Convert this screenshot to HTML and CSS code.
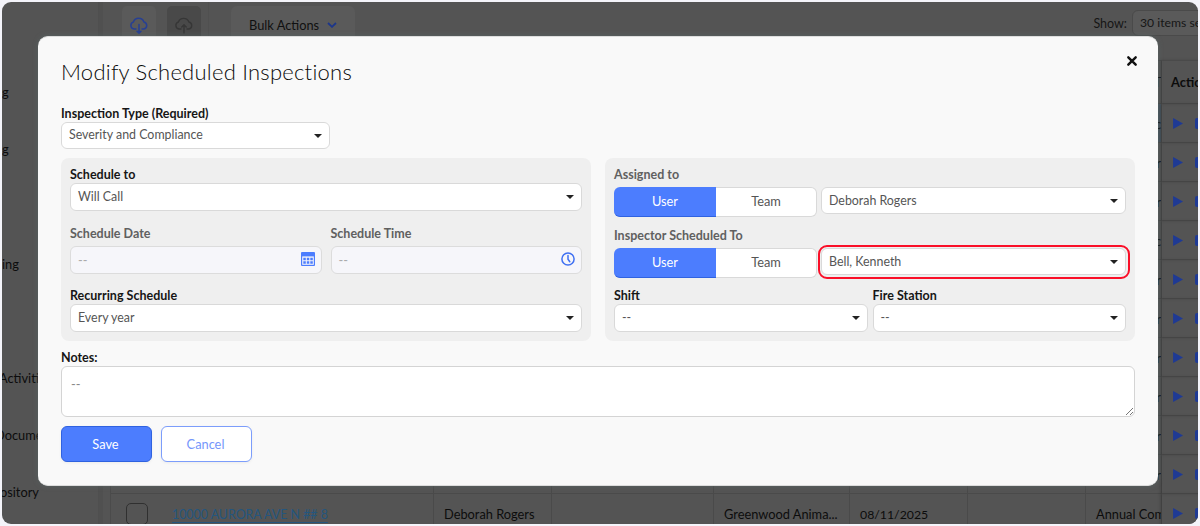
FILE: index.html
```html
<!DOCTYPE html>
<html lang="en">
<head>
    <meta charset="UTF-8">
    <meta name="viewport" content="width=device-width, initial-scale=1.0">
    <title>Scheduled Inspections</title>
    <link rel="stylesheet" href="styles.css">
</head>
<body>
    <div class="screen">
        <div class="page">
            <nav class="sidebar">
                <div>g</div>
                <div>g</div>
                <div></div>
                <div>ing</div>
                <div></div>
                <div class="activities">Activities</div>
                <div class="documents">Documents</div>
                <div class="repository">ository</div>
            </nav>
            <main class="main">
                <div class="toolbar">
                    <div class="tool-group">
                        <button class="tool">
                            <svg width="20" height="18" viewBox="0 0 20 18" fill="none" stroke="#263f94" stroke-width="1.5" stroke-linecap="round" stroke-linejoin="round"><path d="M7 12H5A3.6 3.6 0 0 1 4.4 5A5.6 5.6 0 0 1 14.9 5A3.6 3.6 0 0 1 15 12H13M10 7.5V16M8 14.2L10 16.2L12 14.2"/></svg>
                        </button>
                        <button class="tool off">
                            <svg width="20" height="18" viewBox="0 0 20 18" fill="none" stroke="#363636" stroke-width="1.4" stroke-linecap="round" stroke-linejoin="round"><path d="M7 12H5A3.6 3.6 0 0 1 4.4 5A5.6 5.6 0 0 1 14.9 5A3.6 3.6 0 0 1 15 12H13M10 16V8M7.8 10L10 7.8L12.2 10"/></svg>
                        </button>
                    </div>
                    <button class="bulk">Bulk Actions
                        <svg width="10" height="6" viewBox="0 0 10 6" fill="none" stroke="#1c368c" stroke-width="1.8"><path d="M1 1L5 4.8L9 1"/></svg>
                    </button>
                    <div class="show">Show: <span class="show-select">30 items selected</span></div>
                </div>
                <table class="grid">
                    <colgroup>
                        <col class="c-address"><col class="c-small"><col class="c-name"><col class="c-date"><col class="c-small"><col class="c-small"><col class="c-type"><col class="c-actions">
                    </colgroup>
                    <tr class="head"><td colspan="6"></td><td class="peek">T</td><td class="actions">Actions</td></tr>
                    <tr class="picked"><td colspan="6"></td><td class="peek">c</td><td class="actions"><i></i><b></b></td></tr>
                    <tr><td colspan="6"></td><td class="peek">r</td><td class="actions"><i></i><b></b></td></tr>
                    <tr><td colspan="6"></td><td class="peek">r</td><td class="actions"><i></i><b></b></td></tr>
                    <tr><td colspan="6"></td><td class="peek">c</td><td class="actions"><i></i><b></b></td></tr>
                    <tr><td colspan="6"></td><td class="peek">r</td><td class="actions"><i></i><b></b></td></tr>
                    <tr><td colspan="6"></td><td class="peek">r</td><td class="actions"><i></i><b></b></td></tr>
                    <tr><td colspan="6"></td><td class="peek">r</td><td class="actions"><i></i><b></b></td></tr>
                    <tr><td colspan="6"></td><td class="peek">r</td><td class="actions"><i></i><b></b></td></tr>
                    <tr><td colspan="6"></td><td class="peek">r</td><td class="actions"><i></i><b></b></td></tr>
                    <tr><td></td><td></td><td></td><td></td><td></td><td></td><td class="peek">r</td><td class="actions"><i></i><b></b></td></tr>
                    <tr>
                        <td><div class="address"><span class="check"></span><a>10000 AURORA AVE N ## 8</a></div></td>
                        <td>Deborah Rogers</td>
                        <td></td>
                        <td>Greenwood Anima...</td>
                        <td class="date">08/11/2025</td>
                        <td></td>
                        <td>Annual Compliance</td>
                        <td class="actions"><i></i><b></b></td>
                    </tr>
                </table>
            </main>
        </div>

        <div class="modal">
            <div class="modal-head">
                <h1>Modify Scheduled Inspections</h1>
                <svg class="close" width="12" height="12" viewBox="0 0 12 12" stroke="#111" stroke-width="2.4" stroke-linecap="round"><path d="M2.3 2.3L9.7 9.7M9.7 2.3L2.3 9.7"/></svg>
            </div>

            <label class="strong">Inspection Type (Required)</label>
            <div class="select type">Severity and Compliance</div>

            <div class="panels">
                <div class="panel">
                    <label class="strong">Schedule to</label>
                    <div class="select">Will Call</div>
                    <div class="pair date-row">
                        <div>
                            <label>Schedule Date</label>
                            <div class="input">--
                                <svg width="14" height="14" viewBox="0 0 14 14"><rect width="14" height="14" rx="1" fill="#4c7dfe"/><path fill="#f6f6fa" d="M1.2 4.4h11.6v8.4H1.2z"/><path fill="#4c7dfe" d="M2.3 5.7h2.5v2.5H2.3zM5.8 5.7h2.5v2.5H5.8zM9.3 5.7h2.5v2.5H9.3zM2.3 9.2h2.5v2.5H2.3zM5.8 9.2h2.5v2.5H5.8zM9.3 9.2h2.5v2.5H9.3z"/></svg>
                            </div>
                        </div>
                        <div>
                            <label>Schedule Time</label>
                            <div class="input">--
                                <svg width="14" height="14" viewBox="0 0 14 14" fill="none" stroke="#3f70f2" stroke-width="1.5" stroke-linecap="round"><circle cx="7" cy="7" r="6.1"/><path d="M7 3.5V7.2L8.8 9.7"/></svg>
                            </div>
                        </div>
                    </div>
                    <label class="strong">Recurring Schedule</label>
                    <div class="select">Every year</div>
                </div>

                <div class="panel">
                    <label>Assigned to</label>
                    <div class="assign">
                        <div class="toggle"><span class="on">User</span><span>Team</span></div>
                        <div class="select">Deborah Rogers</div>
                    </div>
                    <label class="second">Inspector Scheduled To</label>
                    <div class="assign">
                        <div class="toggle"><span class="on">User</span><span>Team</span></div>
                        <div class="select marked">Bell, Kenneth</div>
                    </div>
                    <div class="pair shift-row">
                        <div>
                            <label class="strong">Shift</label>
                            <div class="select">--</div>
                        </div>
                        <div>
                            <label class="strong">Fire Station</label>
                            <div class="select">--</div>
                        </div>
                    </div>
                </div>
            </div>

            <label class="strong notes-label">Notes:</label>
            <div class="notes">--
                <svg width="9" height="9" viewBox="0 0 9 9" stroke="#777" stroke-width="1"><path d="M1 8L8 1M5 8L8 5"/></svg>
            </div>

            <div class="buttons">
                <button class="btn save">Save</button>
                <button class="btn cancel">Cancel</button>
            </div>
        </div>
    </div>
</body>
</html>
```
FILE: styles.css
```css
* {
    box-sizing: border-box;
}
body {
    margin: 0;
    padding: 2px;
    background: #f4f4fa;
    font-family: 'Lato', sans-serif;
    font-size: 12.8px;
    color: #555;
    overflow: hidden;
}
button {
    font-family: inherit;
    font-size: inherit;
    border: none;
    padding: 0;
}
.screen {
    position: relative;
    width: 1196px;
    height: 522px;
    border-radius: 9px;
    overflow: hidden;
    background: #545454;
}

/* dimmed page behind the dialog */
.page {
    display: flex;
    height: 522px;
    color: #0c0c0c;
}
.sidebar {
    width: 97px;
    flex: none;
    padding-top: 61px;
    border-right: 1px solid #4f4f4f;
    white-space: nowrap;
}
.sidebar div {
    height: 57.2px;
    line-height: 58px;
}
.sidebar .activities {
    margin-left: -3px;
}
.sidebar .documents {
    margin-left: -7px;
}
.sidebar .repository {
    margin-left: -2px;
}
.main {
    flex: none;
    width: 1099px;
    padding-left: 12px;
    border-left: 4px solid #505050;
    overflow: hidden;
}
.toolbar {
    display: flex;
    height: 58px;
    padding-top: 4px;
    align-items: flex-start;
}
.tool-group {
    display: flex;
    gap: 11px;
    width: 98px;
    height: 54px;
    margin: -4px 11px 0 -4px;
    padding: 4px 0 0 11px;
    border-right: 1px solid #505050;
}
.tool {
    width: 34px;
    height: 38px;
    padding-top: 4px;
    border-radius: 5px;
    background: #5a5a5a;
}
.tool.off {
    background: #494949;
}
.bulk {
    display: flex;
    align-items: center;
    gap: 8px;
    width: 124px;
    height: 37px;
    margin-left: 11px;
    padding-left: 18px;
    border-radius: 6px;
    background: #5a5a5a;
    color: #101010;
}
.show {
    display: flex;
    align-items: center;
    gap: 5px;
    margin-left: auto;
    margin-right: -30px;
    padding-top: 4px;
    white-space: nowrap;
    font-size: 12.5px;
    color: #161616;
}
.show-select {
    width: 96px;
    height: 26px;
    line-height: 24px;
    padding-left: 7px;
    border: 1px solid #4a4a4a;
    border-radius: 6px;
    background: #5a5a5a;
    font-size: 12.2px;
}
.grid {
    table-layout: fixed;
    width: 1101px;
    margin-left: -5px;
    border-collapse: separate;
    border-spacing: 0;
    border-left: 1px solid #4b4b4b;
    background: #545454;
}
.c-address { width: 323px; }
.c-small { width: 118px; }
.c-name { width: 162px; }
.c-date { width: 136px; }
.c-type { width: 76px; }
.grid td {
    height: 39px;
    padding: 2px 0 0 10px;
    border-bottom: 1px solid #4a4a4a;
    border-right: 1px solid #4a4a4a;
    overflow: hidden;
    white-space: nowrap;
}
.grid .head td {
    height: 44px;
    padding-top: 0;
    border-top: 1px solid #4a4a4a;
}
.grid .peek {
    text-align: right;
}
.grid .picked .peek {
    background: #46525c;
}
.grid .date {
    font-size: 12.3px;
}
.grid .actions {
    padding-left: 9px;
    border-right: none;
    box-shadow: -2px 0 3px rgba(0, 0, 0, .15);
    font-weight: 700;
}
.actions i {
    display: inline-block;
    width: 10px;
    height: 11px;
    margin-left: 2px;
    background: #1f3a94;
    clip-path: polygon(0 0, 100% 50%, 0 100%);
}
.actions b {
    display: inline-block;
    width: 12px;
    height: 11px;
    margin-left: 12px;
    border-radius: 2px;
    background: #1f3a94;
}
.address {
    display: flex;
    align-items: center;
    gap: 24px;
    padding-left: 5px;
    font-size: 12.4px;
}
.check {
    width: 22px;
    height: 22px;
    border: 1px solid #303030;
    border-radius: 5px;
}
.address a {
    color: #24567e;
    text-decoration: underline;
    text-underline-offset: 3px;
}

/* dialog */
.modal {
    position: absolute;
    top: 34px;
    left: 36px;
    width: 1120px;
    height: 450px;
    padding: 0 23px;
    border: 1px solid #ddd;
    border-width: 1px 0;
    border-radius: 10px;
    background: #f9f9f9;
    box-shadow: 0 0 5px rgba(90, 105, 105, .7);
}
.modal-head {
    display: flex;
    justify-content: space-between;
    height: 69px;
}
h1 {
    margin: 19px 0 0;
    font-size: 22px;
    line-height: 32px;
    font-weight: 300;
    letter-spacing: .24px;
    color: #0a0a0a;
}
.close {
    margin: 18px -3px 0 0;
}
label {
    display: block;
    height: 16px;
    line-height: 15px;
    font-size: 12.5px;
    font-weight: 700;
    color: #606060;
}
label.strong {
    color: #161616;
}
.select {
    position: relative;
    height: 28px;
    padding-left: 7px;
    line-height: 25px;
    border: 1px solid #d9d9d9;
    border-radius: 6px;
    background: #fff;
    font-size: 12.4px;
}
.select::after {
    content: "";
    position: absolute;
    right: 7px;
    top: 11px;
    border: 4px solid transparent;
    border-top-color: #222;
    border-bottom: none;
}
.type {
    width: 269px;
    height: 27px;
    margin-bottom: 9px;
    line-height: 24px;
}
.panels {
    display: grid;
    grid-template-columns: 530px 530px;
    gap: 14px;
}
.panel {
    height: 183px;
    padding: 9px;
    border-radius: 8px;
    background: #efefef;
}
.pair {
    display: grid;
    grid-template-columns: 1fr 1fr;
}
.date-row {
    gap: 9px;
    margin: 15px 0 14px;
}
.input {
    display: flex;
    align-items: center;
    justify-content: space-between;
    height: 28px;
    margin-top: 4px;
    padding: 0 6px 0 7px;
    border: 1px solid #dcdcdc;
    border-radius: 6px;
    background: #f6f6fa;
    color: #aaa;
}
.input svg {
    margin-top: -2px;
}
.assign {
    display: grid;
    grid-template-columns: 203px 1fr;
    gap: 4px;
    margin-top: 4px;
}
.assign .select {
    height: 27px;
}
.second {
    margin-top: 11px;
    line-height: 17px;
}
.second + .assign {
    margin-top: 5px;
}
.toggle {
    display: grid;
    grid-template-columns: 102px 101px;
    height: 29px;
    line-height: 27px;
    text-align: center;
}
.toggle span {
    border: 1px solid #d9d9d9;
    border-left: none;
    border-radius: 0 6px 6px 0;
    background: #fff;
}
.toggle .on {
    border: none;
    border-bottom: 1px solid #2f62e0;
    border-radius: 6px 0 0 6px;
    background: #4c7dfe;
    color: #fff;
    line-height: 29px;
}
.marked::before {
    content: "";
    position: absolute;
    inset: -4px -5px -5px -4px;
    border: 2px solid #fa0f28;
    border-radius: 9px;
}
.shift-row {
    gap: 5px;
    margin-top: 11px;
}
.notes-label {
    margin-top: 9px;
}
.notes {
    position: relative;
    height: 51px;
    padding: 9px;
    border: 1px solid #d4d4d4;
    border-radius: 6px;
    background: #fff;
    color: #888;
}
.notes svg {
    position: absolute;
    right: 0;
    bottom: 0;
}
.buttons {
    display: flex;
    gap: 9px;
    margin-top: 9px;
}
.btn {
    width: 91px;
    height: 36px;
    padding-right: 2px;
    border: 1px solid #2f62e0;
    border-radius: 6px;
    box-shadow: 0 1px 3px rgba(0, 0, 0, .06);
}
.save {
    background: #4c7dfe;
    color: #fff;
}
.cancel {
    border-color: #7c9dfb;
    background: #fff;
    color: #7596fb;
}
```
